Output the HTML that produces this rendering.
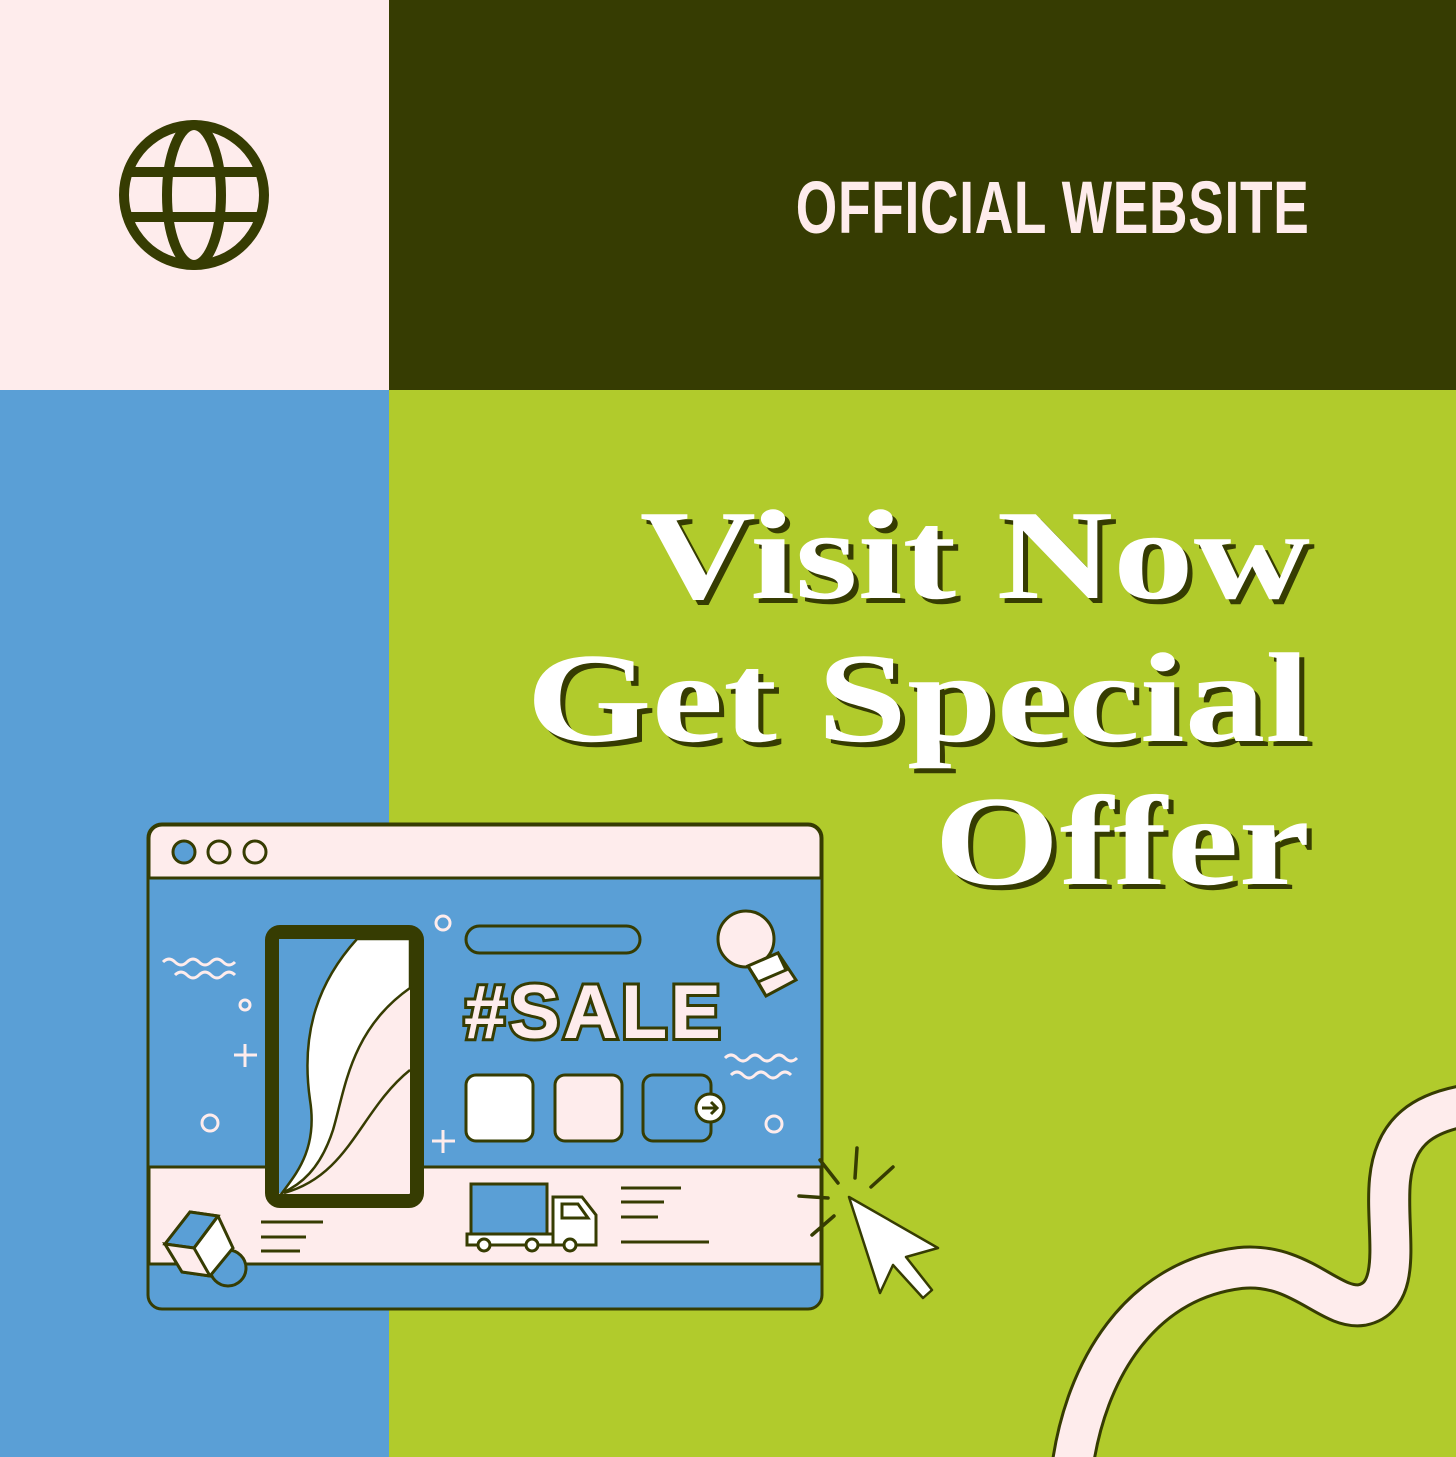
<!DOCTYPE html>
<html><head><meta charset="utf-8"><style>
html,body{margin:0;padding:0}
body{width:1456px;height:1457px;position:relative;overflow:hidden;background:#b1cb2c}
.pk{position:absolute;left:0;top:0;width:389px;height:390px;background:#feecec}
.dk{position:absolute;left:389px;top:0;width:1067px;height:390px;background:#363c02}
.bl{position:absolute;left:0;top:390px;width:389px;height:1067px;background:#5a9fd6}
.gr{position:absolute;left:389px;top:390px;width:1067px;height:1067px;background:#b1cb2c}
.ow{position:absolute;right:146px;top:166px;font-family:"Liberation Sans Narrow","Liberation Sans",sans-serif;font-weight:bold;font-size:74px;line-height:84px;color:#feecec;transform:scaleX(0.72);transform-origin:right center;white-space:nowrap;letter-spacing:1px}
.hd{position:absolute;right:146px;top:484px;text-align:right;font-family:"Liberation Serif",serif;font-weight:bold;font-size:128px;line-height:143px;color:#fff;text-shadow:4px 5px 0 #363c02;white-space:nowrap;transform:scaleX(1.26);transform-origin:right top}
svg{position:absolute;left:0;top:0}
</style></head><body>
<div class="pk"></div><div class="dk"></div><div class="bl"></div><div class="gr"></div>
<div class="ow">OFFICIAL WEBSITE</div>
<div class="hd">Visit Now<br>Get Special<br>Offer</div>
<svg width="1456" height="1457" viewBox="0 0 1456 1457">
<g fill="none" stroke="#363c02" stroke-width="10">
<circle cx="194" cy="195" r="70"/>
<ellipse cx="194" cy="195" rx="27" ry="70"/>
<line x1="126" y1="172" x2="262" y2="172"/>
<line x1="126" y1="217" x2="262" y2="217"/>
</g>
<path d="M1072 1470 C1085 1370 1140 1280 1240 1268 C1300 1262 1330 1310 1362 1305 C1405 1296 1385 1230 1390 1180 C1395 1130 1425 1112 1470 1105" fill="none" stroke="#363c02" stroke-width="44"/>
<path d="M1072 1470 C1085 1370 1140 1280 1240 1268 C1300 1262 1330 1310 1362 1305 C1405 1296 1385 1230 1390 1180 C1395 1130 1425 1112 1470 1105" fill="none" stroke="#feecec" stroke-width="38"/>
<g stroke="#363c02" stroke-width="3">
<rect x="148" y="824" width="674" height="485" rx="14" fill="#5a9fd6"/>
<path d="M149 878 V838 a13 13 0 0 1 13 -13 H808 a13 13 0 0 1 13 13 V878 Z" fill="#feecec"/>
<rect x="149" y="1167" width="672" height="97" fill="#feecec"/>
<circle cx="184" cy="852" r="11" fill="#5a9fd6"/>
<circle cx="219" cy="852" r="11" fill="#feecec"/>
<circle cx="255" cy="852" r="11" fill="#feecec"/>
</g>
<g fill="none" stroke="#feecec" stroke-width="3">
<path d="M163 962 q6 -6 12 0 t12 0 t12 0 t12 0 t12 0 t12 0"/>
<path d="M175 975 q6 -6 12 0 t12 0 t12 0 t12 0 t12 0"/>
<path d="M725 1058 q6 -6 12 0 t12 0 t12 0 t12 0 t12 0 t12 0"/>
<path d="M731 1075 q6 -6 12 0 t12 0 t12 0 t12 0 t12 0"/>
<circle cx="443" cy="923" r="7"/>
<circle cx="245" cy="1005" r="5"/>
<circle cx="210" cy="1123" r="8"/>
<circle cx="774" cy="1124" r="8"/>
<path d="M245 1044 V1067 M234 1055 H257"/>
<path d="M443 1130 V1153 M432 1141 H455"/>
</g>
<g stroke="#363c02" stroke-width="3">
<rect x="466" y="926" width="174" height="27" rx="13.5" fill="#5a9fd6"/>
<circle cx="746" cy="939" r="28" fill="#feecec"/>
<path d="M748 966 L778 953 L796 980 L766 996 Z" fill="#feecec"/>
<path d="M748 966 L778 953 L786 970 L758 982 Z" fill="#fff"/>
<path d="M748 966 L758 982 L766 996 Z" fill="#fff"/>
<rect x="466" y="1075" width="67" height="66" rx="10" fill="#fff"/>
<rect x="555" y="1075" width="67" height="66" rx="10" fill="#feecec"/>
<rect x="643" y="1075" width="68" height="66" rx="10" fill="#5a9fd6"/>
<circle cx="710" cy="1108" r="14" fill="#fff"/>
</g>
<path d="M702 1108 H717 M711 1102 L717 1108 L711 1114" fill="none" stroke="#363c02" stroke-width="3"/>
<text x="464" y="1038" font-family="Liberation Sans,sans-serif" font-weight="bold" font-size="76" fill="#feecec" stroke="#363c02" stroke-width="6" paint-order="stroke" letter-spacing="3">#SALE</text>
<rect x="272" y="932" width="145" height="269" rx="8" fill="#feecec" stroke="#363c02" stroke-width="14"/>
<path d="M279 939 H357 C320 980 300 1030 310 1100 C318 1150 295 1175 282 1193 H279 Z" fill="#5a9fd6"/>
<path d="M357 939 H410 V988 C350 1030 345 1090 333 1130 C320 1170 300 1185 282 1193 C295 1175 318 1150 310 1100 C300 1030 320 980 357 939 Z" fill="#fff" stroke="#363c02" stroke-width="2.5"/>
<path d="M410 1070 C360 1110 350 1175 284 1193" fill="none" stroke="#363c02" stroke-width="2.5"/>
<g stroke="#363c02" stroke-width="3">
<circle cx="228" cy="1268" r="18" fill="#5a9fd6"/>
<path d="M165 1244 L190 1212 L218 1216 L233 1248 L210 1276 L182 1272 Z" fill="#fff"/>
<path d="M165 1244 L190 1212 L218 1216 L194 1248 Z" fill="#5a9fd6"/>
<path d="M165 1244 L194 1248 L210 1276 L182 1272 Z" fill="#feecec"/>
<path d="M194 1248 L218 1216"/>
</g>
<g stroke="#363c02" stroke-width="3">
<path d="M261 1222 H323 M261 1237 H306 M261 1251 H300"/>
<path d="M621 1188 H681 M621 1202 H664 M621 1217 H658 M621 1242 H709"/>
</g>
<g stroke="#363c02" stroke-width="3">
<rect x="471" y="1184" width="76" height="50" fill="#5a9fd6"/>
<path d="M553 1197 H582 L596 1215 V1245 H553 Z" fill="#fff"/>
<path d="M562 1204 H578 L588 1218 H562 Z" fill="#fff"/>
<rect x="467" y="1234" width="86" height="11" fill="#fff"/>
<circle cx="484" cy="1245" r="6" fill="#fff"/>
<circle cx="532" cy="1245" r="6" fill="#fff"/>
<circle cx="570" cy="1245" r="6" fill="#fff"/>
</g>
<g stroke="#363c02" stroke-width="3.5" stroke-linecap="round">
<path d="M820 1160 L838 1183 M857 1148 L855 1178 M893 1167 L871 1187 M799 1196 L828 1198 M834 1216 L812 1235"/>
</g>
<path d="M849 1197 L938 1248 L906 1257 L932 1290 L923 1298 L893 1265 L880 1293 Z" fill="#fff" stroke="#363c02" stroke-width="2.5" stroke-linejoin="round"/>
</svg>
</body></html>
